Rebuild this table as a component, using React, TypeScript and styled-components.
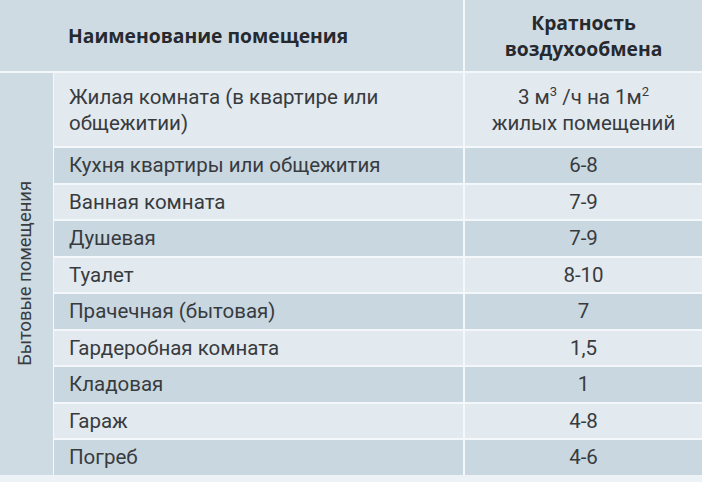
import React from "react";
import styled, { createGlobalStyle } from "styled-components";

const Global = createGlobalStyle`
  html, body { margin: 0; padding: 0; background: #edf2f7; }
  body { font-family: Roboto, "Open Sans", sans-serif; }
`;

const Table = styled.div`
  width: 702px;
  display: grid;
  grid-template-columns: 53px 409px 238px;
  grid-template-rows: 71px 73px repeat(9, 34.5px);
  column-gap: 1px;
  row-gap: 2px;
  background: #f5f8fa;
`;

const HeadCell = styled.div<{ $center?: boolean; $wide?: boolean }>`
  grid-column: ${(p) => (p.$wide ? "1 / span 2" : "auto")};
  background: #cfdbe3;
  display: flex;
  align-items: center;
  justify-content: ${(p) => (p.$center ? "center" : "flex-start")};
  text-align: ${(p) => (p.$center ? "center" : "left")};
  padding-left: ${(p) => (p.$center ? "0" : "68px")};
  margin-left: ${(p) => (p.$center ? "1px" : "0")};
  font-family: "Open Sans", sans-serif;
  font-weight: 700;
  font-size: 19.3px;
  line-height: 26px;
  color: #262a2e;
`;

const SideLabel = styled.div`
  grid-column: 1;
  grid-row: 2 / span 10;
  background: #cfdbe3;
  display: flex;
  align-items: center;
  justify-content: center;
  padding-right: 4px;
`;

const SideText = styled.span`
  writing-mode: vertical-rl;
  transform: rotate(180deg);
  font-size: 18.4px;
  color: #3a3d40;
  white-space: nowrap;
`;

const Cell = styled.div<{ $dark: boolean; $center?: boolean }>`
  background: ${(p) => (p.$dark ? "#c9d7e0" : "#e2e9ef")};
  display: flex;
  align-items: center;
  justify-content: ${(p) => (p.$center ? "center" : "flex-start")};
  text-align: ${(p) => (p.$center ? "center" : "left")};
  padding-left: ${(p) => (p.$center ? "0" : "15px")};
  margin-left: ${(p) => (p.$center ? "1px" : "0")};
  font-size: 20.5px;
  line-height: 26px;
  color: #383b3e;
`;

const Sup = styled.sup`
  font-size: 13px;
  line-height: 0;
  vertical-align: 8px;
`;

const rows: [string, string][] = [
  ["Кухня квартиры или общежития", "6-8"],
  ["Ванная комната", "7-9"],
  ["Душевая", "7-9"],
  ["Туалет", "8-10"],
  ["Прачечная (бытовая)", "7"],
  ["Гардеробная комната", "1,5"],
  ["Кладовая", "1"],
  ["Гараж", "4-8"],
  ["Погреб", "4-6"],
];

export default function App() {
  return (
    <>
      <Global />
      <Table>
        <HeadCell $wide>Наименование помещения</HeadCell>
        <HeadCell $center>
          Кратность
          <br />
          воздухообмена
        </HeadCell>
        <SideLabel>
          <SideText>Бытовые помещения</SideText>
        </SideLabel>
        <Cell $dark={false}>
          Жилая комната (в квартире или
          <br />
          общежитии)
        </Cell>
        <Cell $dark={false} $center>
          <span>
            3 м<Sup>3</Sup> /ч на 1м<Sup>2</Sup>
            <br />
            жилых помещений
          </span>
        </Cell>
        {rows.map(([name, val], i) => (
          <React.Fragment key={name}>
            <Cell $dark={i % 2 === 0}>{name}</Cell>
            <Cell $dark={i % 2 === 0} $center>
              {val}
            </Cell>
          </React.Fragment>
        ))}
      </Table>
    </>
  );
}
